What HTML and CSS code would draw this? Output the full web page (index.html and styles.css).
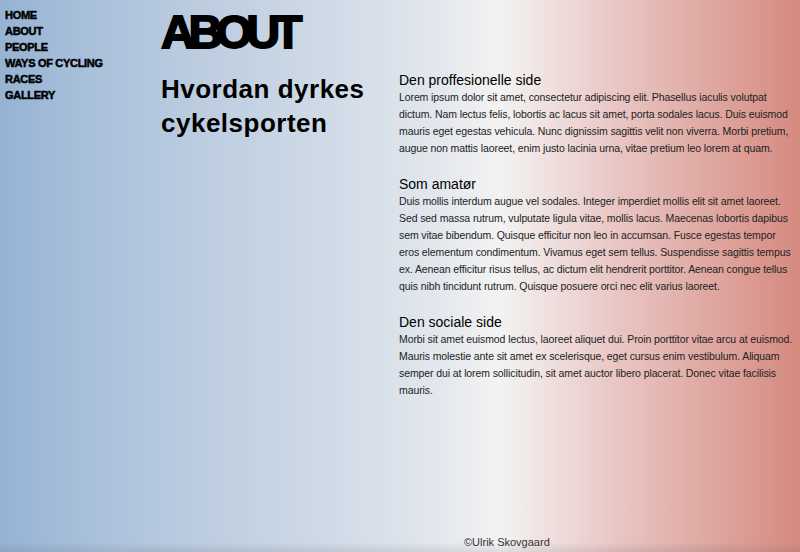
FILE: index.html
```html
<!DOCTYPE html>
<html lang="da">
<head>
<meta charset="utf-8">
<title>About</title>
<link rel="stylesheet" href="styles.css">
</head>
<body>
<div class="page">
  <nav class="nav">
    <ul>
      <li><a href="#">HOME</a></li>
      <li><a href="#">ABOUT</a></li>
      <li><a href="#">PEOPLE</a></li>
      <li><a href="#">WAYS OF CYCLING</a></li>
      <li><a href="#">RACES</a></li>
      <li><a href="#">GALLERY</a></li>
    </ul>
  </nav>
  <main class="main">
    <h1 class="title">ABOUT</h1>
    <div class="row">
      <h2 class="subtitle">Hvordan dyrkes cykelsporten</h2>
      <div class="sections">
        <section class="section">
          <h3>Den proffesionelle side</h3>
          <p>Lorem ipsum dolor sit amet, consectetur adipiscing elit. Phasellus iaculis volutpat dictum. Nam lectus felis, lobortis ac lacus sit amet, porta sodales lacus. Duis euismod mauris eget egestas vehicula. Nunc dignissim sagittis velit non viverra. Morbi pretium, augue non mattis laoreet, enim justo lacinia urna, vitae pretium leo lorem at quam.</p>
        </section>
        <section class="section">
          <h3>Som amatør</h3>
          <p>Duis mollis interdum augue vel sodales. Integer imperdiet mollis elit sit amet laoreet. Sed sed massa rutrum, vulputate ligula vitae, mollis lacus. Maecenas lobortis dapibus sem vitae bibendum. Quisque efficitur non leo in accumsan. Fusce egestas tempor eros elementum condimentum. Vivamus eget sem tellus. Suspendisse sagittis tempus ex. Aenean efficitur risus tellus, ac dictum elit hendrerit porttitor. Aenean congue tellus quis nibh tincidunt rutrum. Quisque posuere orci nec elit varius laoreet.</p>
        </section>
        <section class="section">
          <h3>Den sociale side</h3>
          <p>Morbi sit amet euismod lectus, laoreet aliquet dui. Proin porttitor vitae arcu at euismod. Mauris molestie ante sit amet ex scelerisque, eget cursus enim vestibulum. Aliquam semper dui at lorem sollicitudin, sit amet auctor libero placerat. Donec vitae facilisis mauris.</p>
        </section>
      </div>
    </div>
  </main>
</div>
<footer class="footer">©Ulrik Skovgaard</footer>
</body>
</html>
```
FILE: styles.css
```css
html, body {
  margin: 0;
  padding: 0;
  height: 100%;
}
body {
  font-family: "Liberation Sans", Arial, sans-serif;
  color: #1a1a1a;
  min-height: 100vh;
  display: flex;
  flex-direction: column;
  background:
    linear-gradient(to top, rgba(60, 60, 70, 0.12) 0, rgba(60, 60, 70, 0) 10px),
    linear-gradient(to right,
      #96b3d4 0%,
      #aac1db 12%,
      #bccde0 25%,
      #cbd7e5 37%,
      #d8e0ea 47.5%,
      #e6e9ee 56%,
      #f3f3f3 62.5%,
      #f0e2e1 68%,
      #e9c5c2 77.5%,
      #e0aca6 87%,
      #d68a80 100%);
}
.page {
  display: flex;
  flex: 1;
}
.nav {
  width: 156px;
  padding: 7px 0 0 5px;
}
.nav ul {
  list-style: none;
  margin: 0;
  padding: 0;
}
.nav li {
  font-size: 11px;
  line-height: 16px;
}
.nav a {
  color: #000;
  text-decoration: none;
  font-weight: 900;
  font-size: 11px;
  letter-spacing: -0.3px;
  -webkit-text-stroke: 0.5px #000;
}
.main {
  flex: 1;
  display: flex;
  flex-direction: column;
}
.title {
  margin: 8px 0 0;
  font-size: 47px;
  line-height: 47px;
  font-weight: 900;
  letter-spacing: -6.4px;
  -webkit-text-stroke: 1.8px #000;
  color: #000;
}
.row {
  display: flex;
  margin-top: 17px;
}
.subtitle {
  width: 238px;
  margin: 0;
  font-size: 26px;
  line-height: 34px;
  font-weight: 700;
  letter-spacing: 0.5px;
  color: #000;
}
.sections {
  flex: 1;
  padding-right: 3px;
  display: flex;
  flex-direction: column;
  gap: 19px;
}
.section h3 {
  margin: 0;
  font-size: 14px;
  line-height: 17px;
  font-weight: 400;
  color: #000;
}
.section p {
  margin: 0;
  font-size: 10.5px;
  line-height: 17px;
  letter-spacing: -0.1px;
  color: #222;
}
.footer {
  padding: 0 0 3px 464px;
  font-size: 11px;
  line-height: 14px;
  color: #333;
}
```
